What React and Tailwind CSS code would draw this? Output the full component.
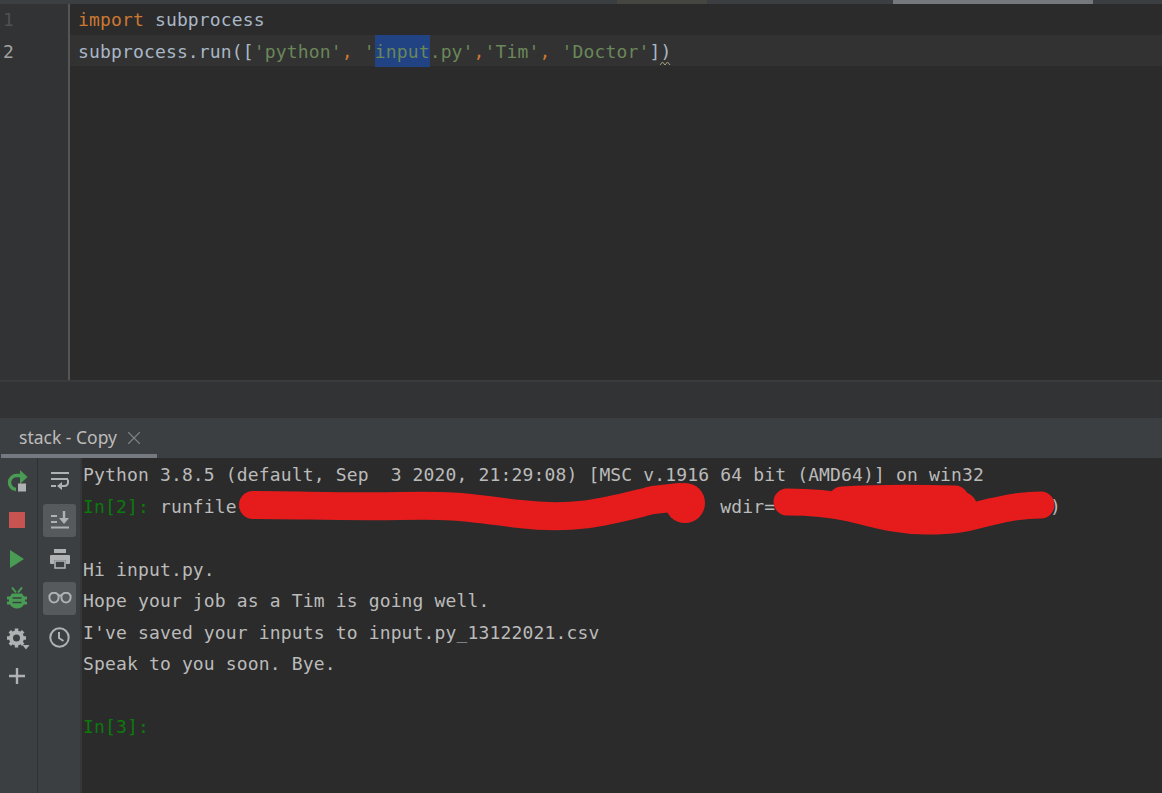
import { X } from "lucide-react";

const mono = "font-['DejaVu_Sans_Mono','Liberation_Mono',monospace] text-[18px] tracking-[0.15px]";

const RerunIcon = () => (
  <svg width="22" height="22" viewBox="0 0 22 22" fill="none">
    <path d="M15 5.500H11a7 7 0 0 0-1 14" stroke="#499c54" strokeWidth="3.400" />
    <path d="M14 0l7.500 7-7.500 7z" fill="#499c54" />
    <rect x="12" y="13.500" width="8" height="8" fill="#afb1b3" />
  </svg>
);

const StopIcon = () => <div className="w-4 h-4 bg-[#c75450]" />;

const RunIcon = () => (
  <svg width="16" height="20" viewBox="0 0 16 20">
    <path d="M1 1l14 9-14 9z" fill="#499c54" />
  </svg>
);

const BugIcon = () => (
  <svg width="20" height="22" viewBox="0 0 20 22" fill="none">
    <path d="M5 6.500h10l2 3H20v3h-2v2h2v3h-3c-1.500 2.500-4 4-7 4s-5.500-1.500-7-4H0v-3h2v-2H0v-3h3z" fill="#499c54" />
    <path d="M5 0.500l4 5M15 0.500l-4 5" stroke="#499c54" strokeWidth="2" />
    <path d="M5.500 11h9M5.500 15.500h9" stroke="#3c3f41" strokeWidth="1.500" />
  </svg>
);

const GearIcon = () => (
  <svg width="26" height="26" viewBox="0 0 26 26" fill="none">
    <circle cx="12.500" cy="14" r="5.500" stroke="#afb1b3" strokeWidth="4" />
    <path d="M12.500 4.500v19M3 14h19M5.800 7.300l13.400 13.400M19.200 7.300L5.800 20.700" stroke="#afb1b3" strokeWidth="3.500" strokeDasharray="3.500 12" />
    <path d="M18.500 21h7l-3.500 4.500z" fill="#afb1b3" />
  </svg>
);

const PlusIcon = () => (
  <svg width="16" height="16" viewBox="0 0 16 16">
    <path d="M0 8h16M8 0v16" stroke="#afb1b3" strokeWidth="2.400" />
  </svg>
);

const WrapIcon = () => (
  <svg width="20" height="21" viewBox="0 0 20 21" fill="none">
    <path d="M1 2h18M1 8h17" stroke="#afb1b3" strokeWidth="2" />
    <path d="M1 15h5" stroke="#afb1b3" strokeWidth="2" />
    <path d="M18 8.500v3a3.500 3.500 0 0 1-3.500 3.500H10" stroke="#afb1b3" strokeWidth="2" />
    <path d="M12 11l-5 4 5 4z" fill="#afb1b3" />
  </svg>
);

const ScrollEndIcon = () => (
  <svg width="20" height="18" viewBox="0 0 20 18" fill="none">
    <path d="M1 16.500h18M1 11h6M1 5h6" stroke="#afb1b3" strokeWidth="2" />
    <path d="M14 0v9" stroke="#afb1b3" strokeWidth="2.400" />
    <path d="M9 7h10l-5 6z" fill="#afb1b3" />
  </svg>
);

const PrintIcon = () => (
  <svg width="22" height="20" viewBox="0 0 22 20" fill="none">
    <rect x="5" y="0" width="12" height="4" fill="#afb1b3" />
    <path d="M2 6h18a1 1 0 0 1 1 1v7a1 1 0 0 1-1 1h-3v-4H5v4H2a1 1 0 0 1-1-1V7a1 1 0 0 1 1-1z" fill="#afb1b3" />
    <rect x="6" y="12" width="10" height="7" stroke="#afb1b3" strokeWidth="1.600" />
  </svg>
);

const GlassesIcon = () => (
  <svg width="24" height="12" viewBox="0 0 24 12" fill="none">
    <path d="M1.500 3.500a5 5 0 0 1 9 0c.6 4-1 7-4.500 7s-5-3-4.500-7zM13.500 3.500a5 5 0 0 1 9 0c.5 4-1 7-4.500 7s-5-3-4.500-7z" stroke="#afb1b3" strokeWidth="2" />
    <path d="M10 3.500h4" stroke="#afb1b3" strokeWidth="2" />
  </svg>
);

const ClockIcon = () => (
  <svg width="21" height="21" viewBox="0 0 21 21" fill="none">
    <circle cx="10.500" cy="10.500" r="9.200" stroke="#afb1b3" strokeWidth="2" />
    <path d="M10 5v6l4.500 3" stroke="#afb1b3" strokeWidth="2" />
  </svg>
);

const ToolButton = ({ active, children }) => (
  <div className="h-[39px] flex items-center justify-start">
    <div className={`w-[33px] h-[33px] rounded-[3px] flex items-center justify-center ${active ? "bg-[#565a5c]" : ""}`}>
      {children}
    </div>
  </div>
);

const Str = ({ children }) => <span className="text-[#6a8759]">{children}</span>;
const Comma = () => <span className="text-[#cc7832]">,</span>;

const consoleLines = [
  "Hi input.py.",
  "Hope your job as a Tim is going well.",
  "I've saved your inputs to input.py_13122021.csv",
  "Speak to you soon. Bye.",
];

export default function App() {
  return (
    <div className="h-[793px] w-[1162px] overflow-hidden flex flex-col bg-[#2b2b2b] text-[#a9b7c6]">
      {/* Scrollbar strip on top */}
      <div className="h-1 shrink-0 bg-[#3c3f41] flex">
        <div className="w-[617px]" />
        <div className="w-[90px] bg-[#45463f]" />
        <div className="w-[186px]" />
        <div className="w-[200px] bg-[#75787d]" />
      </div>

      {/* Editor */}
      <div className="h-[376px] shrink-0 flex">
        <div className={`w-[68px] shrink-0 bg-[#313335] pl-[3px] ${mono}`}>
          <div className="h-[31px] leading-[31px] text-[#4e5254]">1</div>
          <div className="h-[31px] leading-[33px] text-[#a4a3a3]">2</div>
        </div>
        <div className="w-[2px] shrink-0 bg-[#555555]" />
        <div className={`flex-1 min-w-0 whitespace-pre ${mono}`}>
          <div className="h-[31px] leading-[31px] pl-[8px]">
            <span className="text-[#cc7832]">import</span> subprocess
          </div>
          <div className="h-[31px] leading-[33px] pl-[8px] bg-[#323232] relative">
            subprocess.run([<Str>'python'</Str>
            <Comma /> <Str>'</Str>
            <span className="bg-[#214283] pt-[6px] pb-[5px]">
              <Str>input</Str>
            </span>
            <Str>.py'</Str>
            <Comma />
            <Str>'Tim'</Str>
            <Comma /> <Str>'Doctor'</Str>])
            <svg className="absolute left-[590px] top-[26px]" width="12" height="5" viewBox="0 0 12 5" fill="none">
              <path d="M0 4l2.500-3 2.500 3 2.500-3 2.500 3" stroke="#a4a37a" strokeWidth="1" />
            </svg>
          </div>
        </div>
      </div>

      {/* Divider and empty band */}
      <div className="h-[2px] shrink-0 bg-[#3a3b3c]" />
      <div className="h-[36px] shrink-0 bg-[#313335]" />

      {/* Tab bar */}
      <div className="h-10 shrink-0 bg-[#3c3f41] flex">
        <div className="w-[156px] ml-px border-b-4 border-[#747a80] flex items-center pl-[18px] gap-[6px] pt-[4px] text-[#bbbbbb]">
          <span className="font-['Noto_Sans',sans-serif] text-[17.5px] leading-none whitespace-nowrap">stack - Copy</span>
          <X size={22} strokeWidth={1.200} className="text-[#7f8386]" />
        </div>
      </div>

      {/* Console */}
      <div className="flex-1 min-h-0 flex">
        <div className="w-[37px] shrink-0 bg-[#3c3f41] pt-[3.5px]">
          <ToolButton><RerunIcon /></ToolButton>
          <ToolButton><StopIcon /></ToolButton>
          <ToolButton><RunIcon /></ToolButton>
          <ToolButton><BugIcon /></ToolButton>
          <ToolButton><GearIcon /></ToolButton>
          <ToolButton><PlusIcon /></ToolButton>
        </div>
        <div className="w-px shrink-0 bg-[#2f3132]" />
        <div className="w-[42px] shrink-0 bg-[#3c3f41] pt-[3.5px] pl-[5px]">
          <ToolButton><WrapIcon /></ToolButton>
          <ToolButton active><ScrollEndIcon /></ToolButton>
          <ToolButton><PrintIcon /></ToolButton>
          <ToolButton active><GlassesIcon /></ToolButton>
          <ToolButton><ClockIcon /></ToolButton>
        </div>
        <div className="w-[2px] shrink-0 bg-[#353739]" />
        <div className={`flex-1 min-w-0 relative pl-[1px] pt-[1px] whitespace-pre leading-[31.5px] ${mono}`}>
          <div className="text-[#bbbbbb]">Python 3.8.5 (default, Sep  3 2020, 21:29:08) [MSC v.1916 64 bit (AMD64)] on win32</div>
          <div className="text-[#bbbbbb]">
            <span className="text-[#0b7a0b]">In[2]:</span> runfile{" ".repeat(44)}wdir={" ".repeat(25)})
          </div>
          <div className="h-[31.5px]" />
          {consoleLines.map((line) => (
            <div key={line} className="text-[#bbbbbb]">{line}</div>
          ))}
          <div className="h-[31.5px]" />
          <div className="text-[#0b7a0b]">In[3]:</div>

          {/* Red marker scribbles hiding the paths */}
          <svg className="absolute left-[150px] top-[22px]" width="840" height="60" viewBox="0 0 840 60" fill="none">
            <path
              d="M21 25C70 25 110 27 168 26S230 27 288 34 380 30 421 20L448 17"
              stroke="#e61c1c"
              strokeWidth="28"
              strokeLinecap="round"
              strokeLinejoin="round"
            />
            <circle cx="453" cy="23" r="20" fill="#e61c1c" />
            <path
              d="M555 22C585 22 600 24 618 28S660 41 695 41 740 36 758 32 790 25 809 25"
              stroke="#e61c1c"
              strokeWidth="27"
              strokeLinecap="round"
              strokeLinejoin="round"
            />
            <path d="M610 20C640 18 690 18 723 19" stroke="#e61c1c" strokeWidth="27" strokeLinecap="round" />
            <path d="M630 26C660 30 700 30 730 27" stroke="#e61c1c" strokeWidth="30" strokeLinecap="round" />
          </svg>
        </div>
      </div>
    </div>
  );
}
